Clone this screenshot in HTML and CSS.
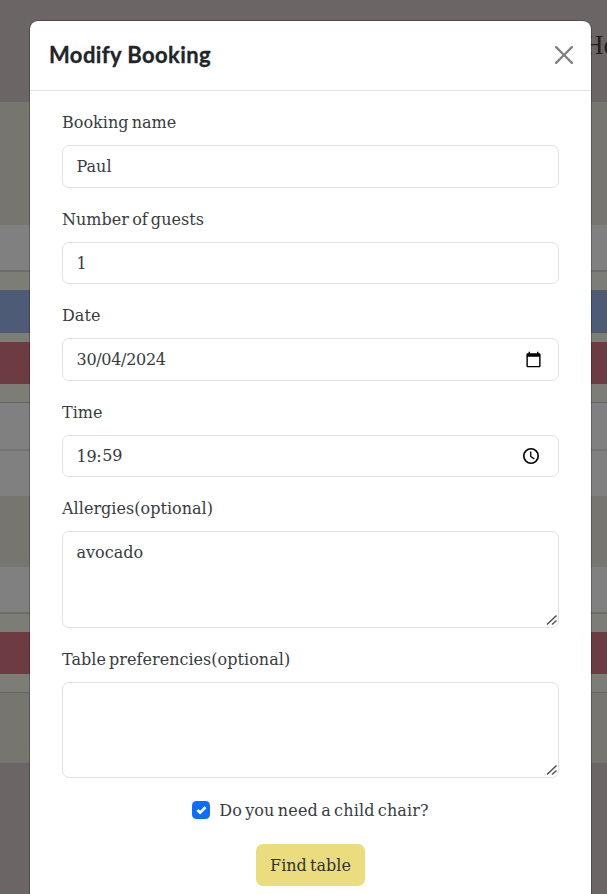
FILE: index.html
```html
<!DOCTYPE html>
<html lang="en">
<head>
<meta charset="utf-8">
<title>Modify Booking</title>
<link rel="stylesheet" href="styles.css">
</head>
<body>
<div class="page" aria-hidden="true">
  <div class="nav"><span>Home</span></div>
  <div class="space top"></div>
  <div class="row first"></div>
  <div class="group"><div class="blue"></div><div class="red"></div></div>
  <div class="row lined"></div>
  <div class="row last"></div>
  <div class="space mid"></div>
  <div class="row first"></div>
  <div class="group single"><div class="red"></div></div>
  <div class="space end"></div>
</div>
<div class="modal">
  <header class="modal-header">
    <h1 class="title">Modify Booking</h1>
    <svg class="close" viewBox="0 0 16 16"><path d="M.293.293a1 1 0 0 1 1.414 0L8 6.586 14.293.293a1 1 0 1 1 1.414 1.414L9.414 8l6.293 6.293a1 1 0 0 1-1.414 1.414L8 9.414l-6.293 6.293a1 1 0 0 1-1.414-1.414L6.586 8 .293 1.707a1 1 0 0 1 0-1.414z"/></svg>
  </header>
  <form class="form">
    <div class="field"><label>Booking name</label><div class="control"><span>Paul</span></div></div>
    <div class="field"><label>Number of guests</label><div class="control"><span class="number">1</span></div></div>
    <div class="field"><label>Date</label><div class="control"><span class="digits">30/04/2024</span>
      <svg class="calendar" viewBox="0 0 24 24"><path d="M20 3h-1V1h-2v2H7V1H5v2H4c-1.100 0-2 .9-2 2v16c0 1.100.9 2 2 2h16c1.100 0 2-.9 2-2V5c0-1.100-.9-2-2-2zm0 18H4V8h16v13z"/></svg></div></div>
    <div class="field"><label>Time</label><div class="control"><span class="digits time">19:<span class="minutes">59</span></span>
      <svg class="clock" viewBox="0 0 20 20"><circle cx="10" cy="10" r="8"/><path class="hand" d="M9.700 5v5.500l4 2.700"/></svg></div></div>
    <div class="field"><label>Allergies(optional)</label><div class="control area"><span>avocado</span>
      <svg class="grip" viewBox="0 0 12 12"><path d="M1 10.500 10.500 1.500M6 10.500 10.500 6.500"/></svg></div></div>
    <div class="field"><label>Table preferencies(optional)</label><div class="control area">
      <svg class="grip" viewBox="0 0 12 12"><path d="M1 10.500 10.500 1.500M6 10.500 10.500 6.500"/></svg></div></div>
    <div class="check"><svg class="box" viewBox="0 0 20 20"><path d="m6 10 3 3 6-6"/></svg><span>Do you need a child chair?</span></div>
    <button class="submit" type="button">Find table</button>
  </form>
</div>
</body>
</html>
```
FILE: styles.css
```css
* { box-sizing: border-box; }
body { margin: 0; height: 894px; overflow: hidden; background: #6b6665; color: #383b40; font-family: "DejaVu Serif", serif; font-size: 16px; word-spacing: -2px; }
.page { height: 894px; overflow: hidden; }
.nav { height: 102px; padding: 29px 0 0 584px; background: #6b6665; color: #231f20; font: 27px/32px "Liberation Serif", serif; white-space: nowrap; }
.space { background: #767570; }
.top { height: 123px; }
.mid { height: 71px; }
.end { height: 70px; }
.row { height: 47px; background: #808080; border-bottom: 2px solid #6c6c6b; }
.row.lined { height: 48px; border-color: #737373; }
.row.last { height: 45px; border: 0; }
.group { height: 131px; padding-top: 18px; background: #7c7d76; border-bottom: 1px solid #656562; }
.blue { height: 43px; margin-bottom: 9px; background: #4e5b76; }
.red { height: 42px; background: #6c3c42; }
.group.single { height: 79px; }
.modal { position: absolute; left: 29px; top: 20px; width: 563px; height: 900px; background: #fff; background-clip: padding-box; border: 1px solid rgba(0,0,0,.25); border-radius: 9px; }
.modal-header { height: 70px; padding: 0 18px 2px 19px; display: flex; align-items: center; justify-content: space-between; border-bottom: 1px solid #dee2e6; }
.title { margin: 0; color: #212529; font: 700 22px/30px Lato, sans-serif; letter-spacing: .4px; word-spacing: 0; white-space: nowrap; -webkit-text-stroke: .3px #212529; }
.close { width: 18px; height: 18px; fill: #7f7f7f; }
.form { padding: 18px 32px; display: flex; flex-direction: column; }
.field { margin-bottom: 18px; }
label { display: block; height: 36.250px; padding-top: .2px; line-height: 27px; white-space: nowrap; letter-spacing: .03px; }
.control { position: relative; height: 42.250px; padding: 0 14px 0 13.500px; display: flex; align-items: center; justify-content: space-between; border: 1px solid #dee2e6; border-radius: 7px; }
.control > .number { padding-top: 2px; }
.digits { letter-spacing: -.3px; }
.time { padding-top: 1px; }
.area { height: 96.500px; padding-top: 11px; align-items: flex-start; }
.field:nth-child(6) .area { height: 96px; }
.calendar { width: 17px; height: 17px; margin-right: 2px; }
.clock { width: 18px; height: 18px; margin-right: 4px; fill: none; stroke: #000; stroke-width: 1.800; }
.hand { stroke-width: 1.500; }
.grip { position: absolute; right: 0; bottom: 1px; width: 12px; height: 12px; fill: none; stroke: #4f4f4f; stroke-width: 1.500; }
.check { height: 27px; margin-top: .5px; display: flex; align-items: center; justify-content: center; gap: 9px; white-space: nowrap; }
.check span { letter-spacing: .15px; }
.box { width: 18px; height: 18px; background: #0d6efd; border-radius: 4.500px; fill: none; stroke: #fff; stroke-width: 3; }
.submit { align-self: center; width: 109px; height: 42px; margin-top: 20.500px; padding: 0; border: 0; border-radius: 7px; background: #ebdd7e; color: #30332f; font: 16px/27px "DejaVu Serif", serif; word-spacing: -1.800px; white-space: nowrap; }
.minutes { position: relative; top: -1px; margin-left: 1px; }
```
